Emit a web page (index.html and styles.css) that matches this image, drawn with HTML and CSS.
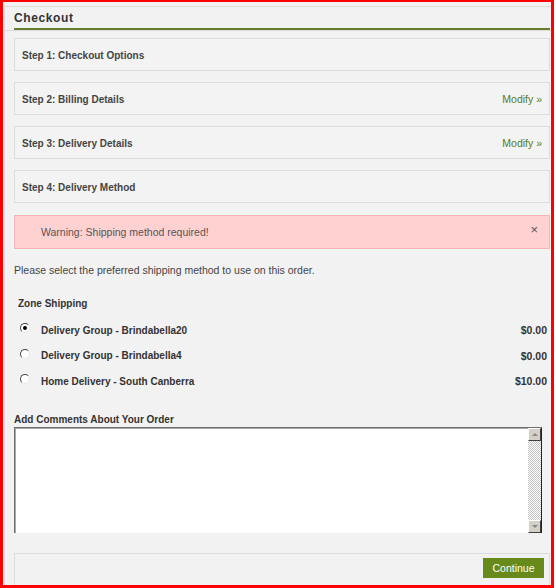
FILE: index.html
```html
<!DOCTYPE html>
<html>
<head>
<meta charset="utf-8">
<link rel="stylesheet" href="styles.css">
</head>
<body>
<div class="frame">
  <div class="box">
    <div class="heading"><h1>Checkout</h1></div>
    <div class="content">
      <div class="step"><span>Step 1: Checkout Options</span></div>
      <div class="step"><span>Step 2: Billing Details</span><a class="modify">Modify &raquo;</a></div>
      <div class="step"><span>Step 3: Delivery Details</span><a class="modify">Modify &raquo;</a></div>
      <div class="step"><span>Step 4: Delivery Method</span></div>
      <div class="warning"><span>Warning: Shipping method required!</span><span class="close">&times;</span></div>
      <p class="intro">Please select the preferred shipping method to use on this order.</p>
      <p class="zone">Zone Shipping</p>
      <div class="options">
        <div class="opt"><span class="radio checked"></span><span class="label">Delivery Group - Brindabella20</span><span class="price">$0.00</span></div>
        <div class="opt"><span class="radio"></span><span class="label">Delivery Group - Brindabella4</span><span class="price">$0.00</span></div>
        <div class="opt"><span class="radio"></span><span class="label">Home Delivery - South Canberra</span><span class="price">$10.00</span></div>
      </div>
      <p class="comments">Add Comments About Your Order</p>
      <div class="textarea">
        <textarea class="ta"></textarea>
        <div class="scroll">
          <div class="sbtn"><span class="up"></span></div>
          <div class="track"></div>
          <div class="sbtn"><span class="down"></span></div>
        </div>
      </div>
      <div class="buttons"><button class="continue">Continue</button></div>
    </div>
  </div>
</div>
</body>
</html>
```
FILE: styles.css
```css
html, body {
  margin: 0;
  padding: 0;
  background: #ffffff;
}
body {
  width: 556px;
  height: 588px;
  overflow: hidden;
  font-family: "Liberation Sans", Arial, sans-serif;
  font-size: 10.5px;
  color: #333;
}
.frame {
  box-sizing: border-box;
  width: 554px;
  height: 588px;
  border: 3px solid #ff0000;
  border-top-width: 2px;
  background: #f2f2f2;
  overflow: hidden;
  padding: 4px 0 0 1px;
}
.box {
  border-top: 1px solid #dcdcdc;
  border-left: 1px solid #dcdcdc;
  height: 600px;
}
.heading {
  border-bottom: 1px solid #dcdcdc;
  padding: 0 1px 0 9px;
}
.heading h1 {
  margin: 0;
  height: 21px;
  line-height: 23px;
  font-size: 12px;
  font-weight: bold;
  letter-spacing: 0.6px;
  color: #333;
  border-bottom: 2px solid #687d2c;
}
.content {
  padding: 7px 1px 0 9px;
}
.step {
  box-sizing: border-box;
  height: 33px;
  border: 1px solid #dcdcdc;
  background: #f3f3f3;
  display: flex;
  align-items: center;
  justify-content: space-between;
  padding: 1px 7px 0 7px;
  margin-bottom: 11px;
  font-weight: bold;
  font-size: 10px;
  color: #444;
}
.step:nth-child(4) {
  margin-bottom: 12px;
}
.modify {
  font-weight: normal;
  font-size: 10.5px;
  color: #5a7a1a;
}
.warning {
  box-sizing: border-box;
  height: 34px;
  border: 1px solid #f4b6b6;
  background: #ffd1d1;
  display: flex;
  align-items: center;
  justify-content: space-between;
  padding: 0 11px 0 26px;
  color: #555;
}
.close {
  font-size: 13px;
  color: #555;
  margin-top: -5px;
}
.intro {
  margin: 14px 0 0 0;
  line-height: 14px;
  color: #444;
}
.zone {
  margin: 20px 0 0 4px;
  line-height: 14px;
  font-weight: bold;
  font-size: 10px;
}
.options {
  margin-top: 11px;
  display: flex;
  flex-direction: column;
  gap: 10.5px;
}
.opt {
  box-sizing: border-box;
  display: flex;
  align-items: center;
  height: 15px;
  padding: 1px 3px 0 6px;
  font-weight: bold;
  font-size: 10px;
}
.radio {
  box-sizing: border-box;
  width: 10px;
  height: 10px;
  border-radius: 50%;
  border: 1px solid;
  border-color: #444 #e6e6e6 #e6e6e6 #444;
  background: #fff;
  margin: -4px 11px 0 0;
  position: relative;
}
.radio.checked::after {
  content: "";
  position: absolute;
  left: 2px;
  top: 2px;
  width: 4px;
  height: 4px;
  border-radius: 50%;
  background: #000;
}
.label {
  flex: 1;
}
.price {
  font-size: 10.5px;
}
.comments {
  margin: 24px 0 0 0;
  line-height: 14px;
  padding-top: 1px;
  font-weight: bold;
  font-size: 10px;
}
.textarea {
  display: flex;
  width: 528px;
  height: 106px;
  margin-top: 0;
  box-sizing: border-box;
  border-top: 1px solid #6f6f6f;
  border-left: 1px solid #6f6f6f;
  background: #fff;
}
.ta {
  flex: 1;
  border: none;
  border-top: 1px solid #a8a8a8;
  border-left: 1px solid #a8a8a8;
  margin: 0;
  padding: 0;
  resize: none;
  outline: none;
  background: #fff;
}
.scroll {
  width: 13px;
  display: flex;
  flex-direction: column;
  border-right: 1px solid #222;
}
.sbtn {
  box-sizing: border-box;
  height: 13px;
  background: #d4d0c8;
  border: 1px solid;
  border-color: #fff #404040 #404040 #fff;
  display: flex;
  align-items: center;
  justify-content: center;
}
.up {
  width: 0;
  height: 0;
  border-left: 3px solid transparent;
  border-right: 3px solid transparent;
  border-bottom: 3px solid #8a8a8a;
}
.down {
  width: 0;
  height: 0;
  border-left: 3px solid transparent;
  border-right: 3px solid transparent;
  border-top: 3px solid #8a8a8a;
}
.track {
  flex: 1;
  background: repeating-conic-gradient(#c4c4c4 0 25%, #ffffff 0 50%) 0 0 / 2px 2px;
}
.buttons {
  margin-top: 20px;
  height: 60px;
  border: 1px solid #dcdcdc;
  background: #f2f2f2;
  display: flex;
  justify-content: flex-end;
  align-items: flex-start;
  padding: 4px 5px 0 0;
}
.continue {
  width: 61px;
  height: 20px;
  border: none;
  background: #688a1a;
  color: #fff;
  font-family: "Liberation Sans", Arial, sans-serif;
  font-size: 10.5px;
  padding: 0;
}
```
